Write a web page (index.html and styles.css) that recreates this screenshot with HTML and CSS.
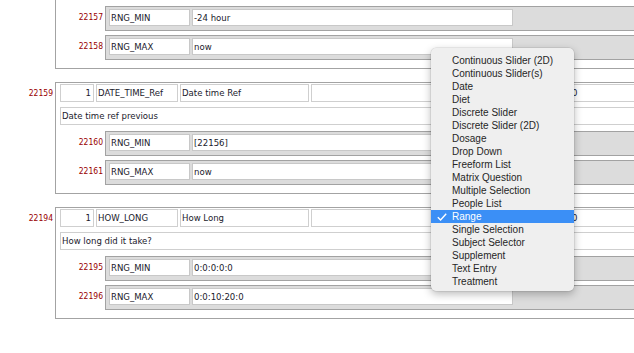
FILE: index.html
```html
<!DOCTYPE html>
<html>
<head>
    <link rel="stylesheet" href="styles.css">
</head>
<body>
    <div class="page">
        <!-- scrolled past: only the lower half shows -->
        <div class="item">
            <div class="item-id"></div>
            <div class="item-box">
                <div class="cells">
                    <div class="cell num"></div>
                    <div class="cell name"></div>
                    <div class="cell title"></div>
                    <div class="cell extra"></div>
                    <div class="cell type"></div>
                </div>
                <div class="desc"></div>
                <div class="sub">
                    <div class="sub-id">22157</div>
                    <div class="sub-box">
                        <div class="field key">RNG_MIN</div>
                        <div class="field value">-24 hour</div>
                    </div>
                </div>
                <div class="sub">
                    <div class="sub-id">22158</div>
                    <div class="sub-box">
                        <div class="field key">RNG_MAX</div>
                        <div class="field value">now</div>
                    </div>
                </div>
            </div>
        </div>

        <div class="item">
            <div class="item-id">22159</div>
            <div class="item-box">
                <div class="cells">
                    <div class="cell num">1</div>
                    <div class="cell name">DATE_TIME_Ref</div>
                    <div class="cell title">Date time Ref</div>
                    <div class="cell extra"></div>
                    <div class="cell type">0</div>
                </div>
                <div class="desc">Date time ref previous</div>
                <div class="sub">
                    <div class="sub-id">22160</div>
                    <div class="sub-box">
                        <div class="field key">RNG_MIN</div>
                        <div class="field value">[22156]</div>
                    </div>
                </div>
                <div class="sub">
                    <div class="sub-id">22161</div>
                    <div class="sub-box">
                        <div class="field key">RNG_MAX</div>
                        <div class="field value">now</div>
                    </div>
                </div>
            </div>
        </div>

        <div class="item">
            <div class="item-id">22194</div>
            <div class="item-box">
                <div class="cells">
                    <div class="cell num">1</div>
                    <div class="cell name">HOW_LONG</div>
                    <div class="cell title">How Long</div>
                    <div class="cell extra"></div>
                    <div class="cell type">0</div>
                </div>
                <div class="desc">How long did it take?</div>
                <div class="sub">
                    <div class="sub-id">22195</div>
                    <div class="sub-box">
                        <div class="field key">RNG_MIN</div>
                        <div class="field value">0:0:0:0:0</div>
                    </div>
                </div>
                <div class="sub">
                    <div class="sub-id">22196</div>
                    <div class="sub-box">
                        <div class="field key">RNG_MAX</div>
                        <div class="field value">0:0:10:20:0</div>
                    </div>
                </div>
            </div>
        </div>
    </div>

    <ul class="menu">
        <li>Continuous Slider (2D)</li>
        <li>Continuous Slider(s)</li>
        <li>Date</li>
        <li>Diet</li>
        <li>Discrete Slider</li>
        <li>Discrete Slider (2D)</li>
        <li>Dosage</li>
        <li>Drop Down</li>
        <li>Freeform List</li>
        <li>Matrix Question</li>
        <li>Multiple Selection</li>
        <li>People List</li>
        <li class="selected">
            <svg class="check" width="10" height="8" viewBox="0 0 10 8">
                <polyline points="0.8,4.2 3.6,7 9.2,0.8" fill="none" stroke="#fff" stroke-width="1.4"/>
            </svg>
            Range
        </li>
        <li>Single Selection</li>
        <li>Subject Selector</li>
        <li>Supplement</li>
        <li>Text Entry</li>
        <li>Treatment</li>
    </ul>
</body>
</html>
```

FILE: styles.css
```css
body {
    margin: 0;
    overflow: hidden;
    background-color: #fff;
    font-family: "DejaVu Sans Condensed", "DejaVu Sans", sans-serif;
    font-size: 9.5px;
    color: #1a1a2c;
}

.page {
    margin-top: -43px;
}

.item {
    display: flex;
    align-items: flex-start;
    margin-bottom: 13px;
}

.item-id {
    flex-shrink: 0;
    width: 53px;
    height: 16px;
    padding-right: 2px;
    padding-top: 3px;
    line-height: 16px;
    text-align: right;
    font-size: 8.5px;
    color: #990000;
}

.item-box {
    flex-shrink: 0;
    width: 700px;
    border: 1px solid #a3a3a3;
    padding: 1px 0 8px 4px;
    background-color: #fff;
}

.cells {
    display: flex;
    gap: 2px;
}

.cell {
    flex-shrink: 0;
    height: 16px;
    line-height: 16px;
    border: 1px solid #cfcfcf;
    padding: 0 1px;
    white-space: nowrap;
    overflow: hidden;
}

.cell.num {
    width: 29px;
    text-align: right;
    padding-right: 2px;
}

.cell.name {
    width: 78px;
}

.cell.title {
    width: 125px;
}

.cell.extra {
    width: 251px;
}

.cell.type {
    flex: 1;
    padding-left: 3px;
}

.desc {
    margin-top: 5px;
    height: 16px;
    line-height: 16px;
    border: 1px solid #cfcfcf;
    padding: 0 1px;
}

.sub {
    display: flex;
    align-items: flex-start;
    margin-top: 4px;
}

.desc + .sub {
    margin-top: 6px;
}

.sub-id {
    flex-shrink: 0;
    width: 43px;
    padding-right: 2px;
    padding-top: 4px;
    line-height: 15px;
    text-align: right;
    font-size: 8.5px;
    color: #990000;
}

.sub-box {
    flex: 1;
    display: flex;
    gap: 2px;
    border: 1px solid #a2a2a2;
    padding: 2px 3px 4px 3px;
    background-color: #dcdcdc;
}

.field {
    flex-shrink: 0;
    height: 15px;
    line-height: 15px;
    border: 1px solid #c8c8c8;
    padding: 0 1px;
    background-color: #fff;
    white-space: nowrap;
}

.field.key {
    width: 77px;
}

.field.value {
    width: 317px;
}

.menu {
    position: absolute;
    left: 431px;
    top: 48px;
    width: 143px;
    margin: 0;
    padding: 6px 0 3px 0;
    list-style: none;
    background-color: #efefef;
    border-radius: 5px;
    box-shadow: 0 0 0 0.5px rgba(0, 0, 0, 0.12), 0 3px 9px rgba(0, 0, 0, 0.28);
    font-family: "Liberation Sans", Arial, sans-serif;
    font-size: 10px;
    color: #262626;
}

.menu li {
    position: relative;
    height: 13px;
    line-height: 13px;
    padding-left: 21px;
    white-space: nowrap;
}

.menu li.selected {
    background-color: #3b8ff6;
    color: #fff;
}

.check {
    position: absolute;
    left: 6px;
    top: 3px;
}
```
